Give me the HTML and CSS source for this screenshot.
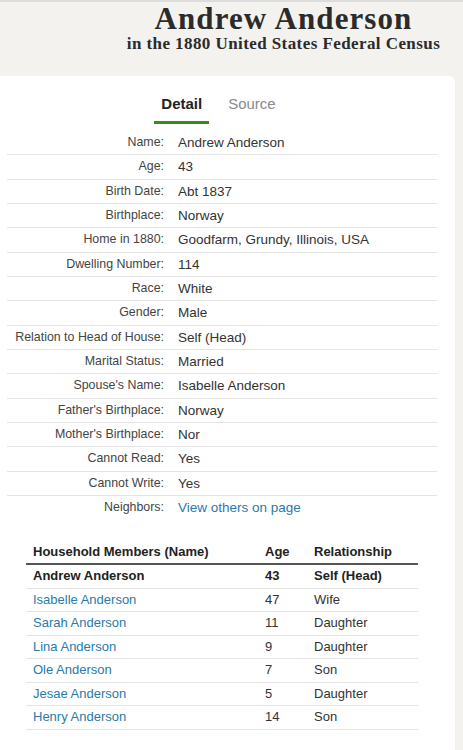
FILE: index.html
```html
<!DOCTYPE html>
<html lang="en">
<head>
    <meta charset="UTF-8">
    <meta name="viewport" content="width=device-width, initial-scale=1.0">
    <title>Andrew Anderson in the 1880 United States Federal Census</title>
    <link rel="stylesheet" href="styles.css">
</head>
<body>
    <header class="record-header">
        <h1 class="record-title">Andrew Anderson</h1>
        <div class="record-subtitle">in the 1880 United States Federal Census</div>
    </header>

    <main class="card">
        <nav class="tabs">
            <a class="tab active">Detail</a>
            <a class="tab">Source</a>
        </nav>

        <table class="details">
            <tr><th>Name:</th><td>Andrew Anderson</td></tr>
            <tr><th>Age:</th><td>43</td></tr>
            <tr><th>Birth Date:</th><td>Abt 1837</td></tr>
            <tr><th>Birthplace:</th><td>Norway</td></tr>
            <tr><th>Home in 1880:</th><td>Goodfarm, Grundy, Illinois, USA</td></tr>
            <tr><th>Dwelling Number:</th><td>114</td></tr>
            <tr><th>Race:</th><td>White</td></tr>
            <tr><th>Gender:</th><td>Male</td></tr>
            <tr><th>Relation to Head of House:</th><td>Self (Head)</td></tr>
            <tr><th>Marital Status:</th><td>Married</td></tr>
            <tr><th>Spouse's Name:</th><td>Isabelle Anderson</td></tr>
            <tr><th>Father's Birthplace:</th><td>Norway</td></tr>
            <tr><th>Mother's Birthplace:</th><td>Nor</td></tr>
            <tr><th>Cannot Read:</th><td>Yes</td></tr>
            <tr><th>Cannot Write:</th><td>Yes</td></tr>
            <tr><th>Neighbors:</th><td><a class="link" href="#">View others on page</a></td></tr>
        </table>

        <table class="household">
            <thead>
                <tr><th>Household Members (Name)</th><th>Age</th><th>Relationship</th></tr>
            </thead>
            <tbody>
                <tr class="self"><td>Andrew Anderson</td><td>43</td><td>Self (Head)</td></tr>
                <tr><td><a class="link" href="#">Isabelle Anderson</a></td><td>47</td><td>Wife</td></tr>
                <tr><td><a class="link" href="#">Sarah Anderson</a></td><td>11</td><td>Daughter</td></tr>
                <tr><td><a class="link" href="#">Lina Anderson</a></td><td>9</td><td>Daughter</td></tr>
                <tr><td><a class="link" href="#">Ole Anderson</a></td><td>7</td><td>Son</td></tr>
                <tr><td><a class="link" href="#">Jesae Anderson</a></td><td>5</td><td>Daughter</td></tr>
                <tr><td><a class="link" href="#">Henry Anderson</a></td><td>14</td><td>Son</td></tr>
            </tbody>
        </table>
    </main>
</body>
</html>
```

FILE: styles.css
```css
body {
    margin: 0;
    height: 100vh;
    box-sizing: border-box;
    display: flex;
    flex-direction: column;
    background: #f4f2ef;
    border-top: 2px solid #dcdcdc;
    font-family: "Liberation Sans", Arial, sans-serif;
    color: #333;
    overflow: hidden;
}

.record-header {
    margin-left: 104px;
    text-align: center;
    padding: 1px 0 0;
    height: 71px;
    flex-shrink: 0;
    box-sizing: border-box;
}

.record-title {
    margin: 0;
    font-family: "Liberation Serif", "Times New Roman", serif;
    font-size: 31px;
    line-height: 31px;
    font-weight: bold;
    color: #2b2b2b;
    letter-spacing: 1.1px;
}

.record-subtitle {
    font-family: "Liberation Serif", "Times New Roman", serif;
    font-size: 17px;
    line-height: 20px;
    font-weight: bold;
    color: #2b2b2b;
    letter-spacing: 0.42px;
}

.card {
    flex: 1;
    background: #fff;
    margin: 3px 8px 0 -8px;
    border-radius: 0 6px 0 0;
    padding: 15px 0 0;
    overflow: hidden;
}

.tabs {
    display: flex;
    justify-content: center;
    gap: 12px;
    margin-right: 10px;
}

.tab {
    padding: 4px 7px 8px;
    font-size: 15px;
    line-height: 18px;
    color: #8a8a8a;
    border-bottom: 3px solid transparent;
}

.tab.active {
    color: #222;
    font-weight: bold;
    border-bottom-color: #3d8a1c;
}

.details {
    margin: 7px 0 0 15px;
    width: 430px;
    border-collapse: collapse;
}

.details tr {
    border-bottom: 1px solid #e4e4e4;
}

.details tr:last-child {
    border-bottom: none;
}

.details th,
.details td {
    padding: 4px 0;
    line-height: 15.33px;
    vertical-align: middle;
}

.details th {
    width: 157px;
    text-align: right;
    font-size: 12.4px;
    font-weight: normal;
    color: #444;
    padding-right: 14px;
    white-space: nowrap;
}

.details td {
    font-size: 13.5px;
    color: #333;
}

.link {
    color: #2a7aaa;
    text-decoration: none;
}

.household {
    margin: 19px 0 0 34px;
    width: 392px;
    border-collapse: collapse;
    font-size: 13px;
}

.household th {
    text-align: left;
    font-weight: 600;
    color: #222;
    padding: 6px 7px 4px;
    border-bottom: 2px solid #555;
}

.household td {
    padding: 4px 7px;
    line-height: 14.5px;
    border-bottom: 1px solid #e4e4e4;
    color: #333;
}

.household th:first-child,
.household td:first-child {
    width: 218px;
}

.household th:nth-child(2),
.household td:nth-child(2) {
    width: 35px;
}

.household .self td {
    font-weight: bold;
    color: #222;
}
```
